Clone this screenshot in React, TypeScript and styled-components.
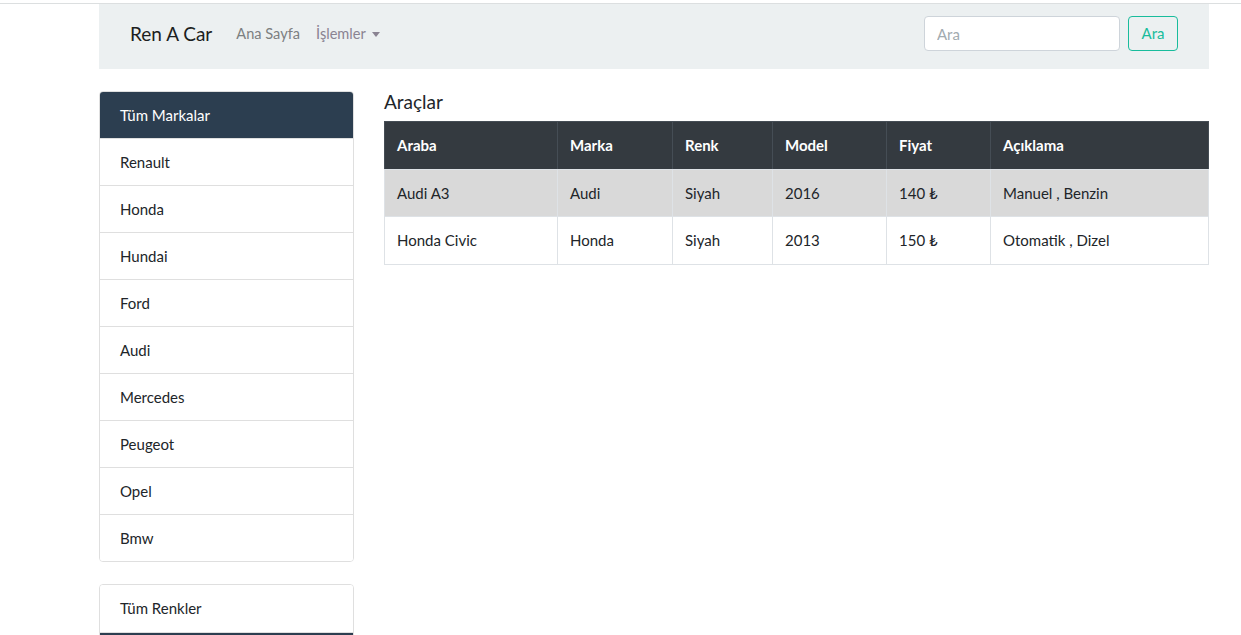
import React from "react";
import styled, { createGlobalStyle } from "styled-components";

const Global = createGlobalStyle`
  html, body { margin: 0; padding: 0; overflow: hidden; background: #fff; }
  body { font-family: Lato, "Open Sans", sans-serif; font-size: 15px; line-height: 1.5; color: #212529; }
  * { box-sizing: border-box; }
`;

const TopLine = styled.div`
  height: 4px;
  border-bottom: 1px solid #dcdfe0;
`;

const Container = styled.div`
  width: 1110px;
  margin-left: 99px;
`;

const Navbar = styled.nav`
  height: 65px;
  background: #ecf0f1;
  display: flex;
  align-items: center;
  padding: 0 31px 6px;
`;

const Brand = styled.a`
  font-size: 19px;
  color: #1c1e20;
  margin-right: 16px;
  text-decoration: none;
  line-height: 1;
`;

const NavLink = styled.a<{ $visited?: boolean }>`
  padding: 0 8px;
  color: ${(p) => (p.$visited ? "#8a8392" : "#7c7f81")};
  text-decoration: none;
  display: flex;
  align-items: center;
  font-size: 14.6px;
`;

const Caret = styled.span`
  display: inline-block;
  margin-left: 6px;
  border-top: 5px solid currentColor;
  border-left: 4px solid transparent;
  border-right: 4px solid transparent;
  margin-top: 2px;
`;

const SearchForm = styled.form`
  margin-left: auto;
  display: flex;
  gap: 8px;
`;

const Input = styled.input`
  width: 196px;
  height: 35px;
  border: 1px solid #ced4da;
  border-radius: 4px;
  padding: 0 12px;
  font: inherit;
  color: #212529;
  &::placeholder { color: #a2abb0; }
`;

const OutlineButton = styled.button`
  width: 50px;
  height: 35px;
  border: 1px solid #18bc9c;
  border-radius: 4px;
  background: transparent;
  color: #18bc9c;
  font: inherit;
  padding: 0;
`;

const Row = styled.div`
  display: grid;
  grid-template-columns: 255px 825px;
  column-gap: 30px;
  margin-top: 22px;
`;

const Sidebar = styled.div`
  display: flex;
  flex-direction: column;
  gap: 22px;
`;

const ListGroup = styled.div`
  display: flex;
  flex-direction: column;
  border: 1px solid #dfdfdf;
  border-radius: 4px;
  overflow: hidden;
`;

const ListItem = styled.div<{ $active?: boolean }>`
  padding: 12px 20px;
  height: 47px;
  flex-shrink: 0;
  background: ${(p) => (p.$active ? "#2c3e50" : "#fff")};
  color: ${(p) => (p.$active ? "#fff" : "#212529")};
  & + & { border-top: 1px solid #dfdfdf; }
`;

const ActiveFirst = styled(ListItem)`
  margin: -1px -1px 0;
  height: 47px;
  padding-top: 13px;
  padding-left: 21px;
`;

const Main = styled.div``;

const Heading = styled.h5`
  margin: 0 0 8px;
  font-size: 19px;
  font-weight: 400;
  line-height: 22px;
  color: #212529;
`;

const Table = styled.table`
  width: 824px;
  border-collapse: collapse;
  table-layout: fixed;
`;

const Th = styled.th<{ $w: number }>`
  width: ${(p) => p.$w}px;
  background: #343a40;
  color: #fff;
  font-weight: 700;
  text-align: left;
  padding: 12px;
  height: 47px;
  border: 1px solid #454d55;
  border-bottom: 1px solid #dee2e6;
`;

const Tr = styled.tr<{ $shade?: boolean }>`
  background: ${(p) => (p.$shade ? "#d9d9d9" : "#fff")};
`;

const Td = styled.td`
  padding: 12px;
  height: 47px;
  border: 1px solid #dee2e6;
`;

const brands = ["Renault", "Honda", "Hundai", "Ford", "Audi", "Mercedes", "Peugeot", "Opel", "Bmw"];
const cols: [string, number][] = [
  ["Araba", 173],
  ["Marka", 115],
  ["Renk", 100],
  ["Model", 114],
  ["Fiyat", 104],
  ["Açıklama", 218],
];
const cars = [
  ["Audi A3", "Audi", "Siyah", "2016", "140 ₺", "Manuel , Benzin"],
  ["Honda Civic", "Honda", "Siyah", "2013", "150 ₺", "Otomatik , Dizel"],
];

export default function App() {
  return (
    <>
      <Global />
      <TopLine />
      <Container>
        <Navbar>
          <Brand href="#">Ren A Car</Brand>
          <NavLink href="#">Ana Sayfa</NavLink>
          <NavLink href="#" $visited>
            İşlemler
            <Caret />
          </NavLink>
          <SearchForm onSubmit={(e) => e.preventDefault()}>
            <Input placeholder="Ara" />
            <OutlineButton type="submit">Ara</OutlineButton>
          </SearchForm>
        </Navbar>
        <Row>
          <Sidebar>
            <ListGroup>
              <ActiveFirst $active>Tüm Markalar</ActiveFirst>
              {brands.map((b) => (
                <ListItem key={b}>{b}</ListItem>
              ))}
            </ListGroup>
            <ListGroup>
              <ListItem>Tüm Renkler</ListItem>
              <ListItem $active aria-label="Siyah" />
            </ListGroup>
          </Sidebar>
          <Main>
            <Heading>Araçlar</Heading>
            <Table>
              <thead>
                <tr>
                  {cols.map(([c, w]) => (
                    <Th key={c} $w={w}>{c}</Th>
                  ))}
                </tr>
              </thead>
              <tbody>
                {cars.map((r, i) => (
                  <Tr key={i} $shade={i === 0}>
                    {r.map((c, j) => (
                      <Td key={j}>{c}</Td>
                    ))}
                  </Tr>
                ))}
              </tbody>
            </Table>
          </Main>
        </Row>
      </Container>
    </>
  );
}
